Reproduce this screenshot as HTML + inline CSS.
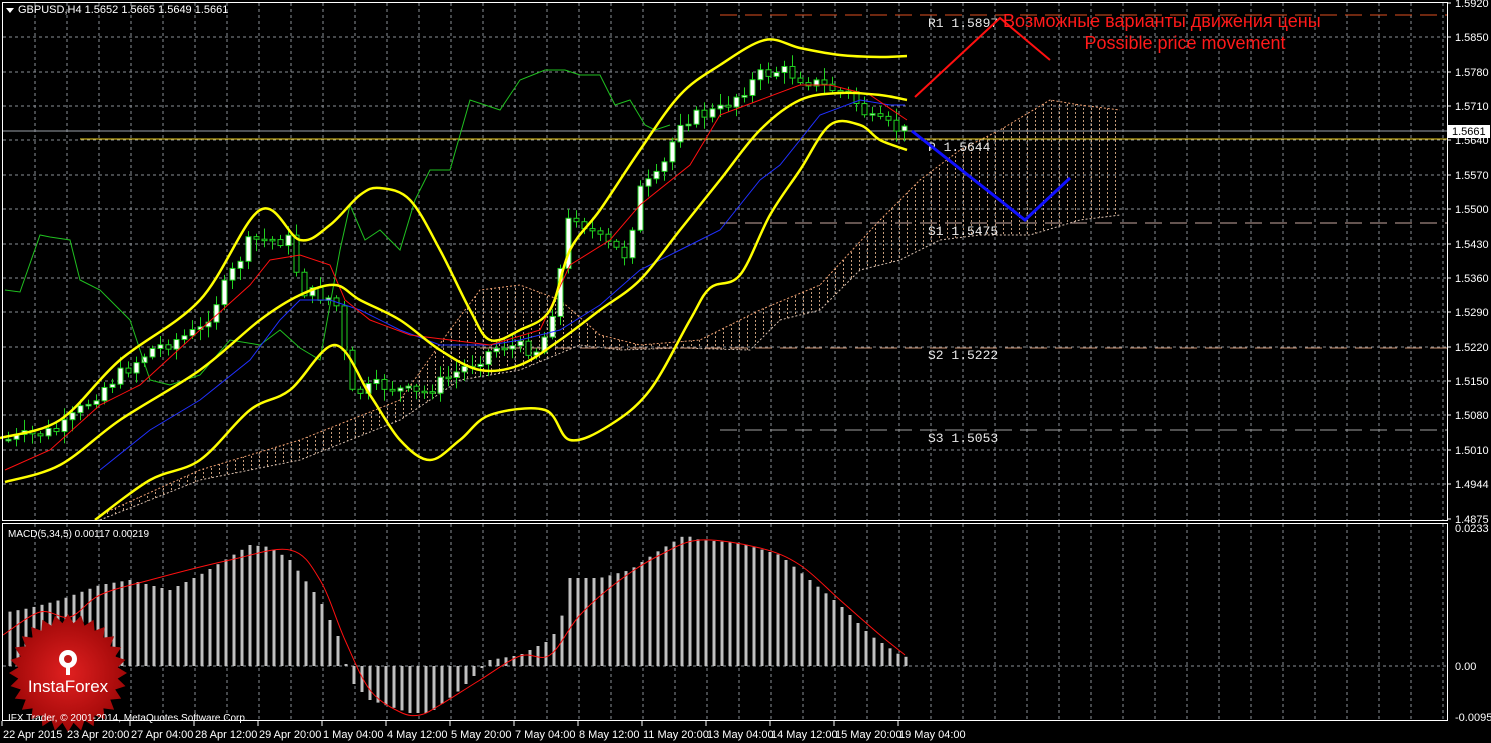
<!DOCTYPE html>
<html><head><meta charset="utf-8"><style>
html,body{margin:0;padding:0;background:#000;width:1491px;height:743px;overflow:hidden}
svg{display:block}
text{font-family:"Liberation Sans","DejaVu Sans",sans-serif}
.mono text{font-family:"Liberation Mono","DejaVu Sans Mono",monospace}
</style></head><body>
<svg id="s" width="1491" height="743" xmlns="http://www.w3.org/2000/svg">
<defs>
<pattern id="hatch" width="8" height="4" patternUnits="userSpaceOnUse">
<rect x="3" y="0" width="1" height="2" fill="#e8b890"/>
</pattern>
<radialGradient id="rg"><stop offset="0" stop-color="#e02020"/><stop offset="1" stop-color="#a00808"/></radialGradient>
</defs>
<rect width="1491" height="743" fill="#000"/>
<g id="grid"></g>
<polygon id="cloud" fill="url(#hatch)" opacity="0.85"/>
<path id="spanA" fill="none" stroke="#f0a070" stroke-width="1" stroke-dasharray="2,2"/>
<path id="spanB" fill="none" stroke="#d8c0b0" stroke-width="1" stroke-dasharray="2,2"/>
<line x1="720" y1="15" x2="1447" y2="15" stroke="#e05020" stroke-dasharray="17,8"/>
<line x1="2" y1="131" x2="1447" y2="131" stroke="#9aa0a8"/>
<line x1="80" y1="139" x2="1447" y2="139" stroke="#f0d020"/>
<line x1="720" y1="223" x2="1447" y2="223" stroke="#c8a8a0" stroke-dasharray="17,8"/>
<line x1="480" y1="348" x2="1447" y2="348" stroke="#c89070" stroke-dasharray="17,8"/>
<line x1="720" y1="430" x2="1447" y2="430" stroke="#a0a0a0" stroke-dasharray="17,8"/>
<g class="mono" font-size="13" fill="#e8e8e8">
<text x="928" y="27">R1 1.5897</text>
<text x="928" y="151">P 1.5644</text>
<text x="928" y="235">S1 1.5475</text>
<text x="928" y="359">S2 1.5222</text>
<text x="928" y="442">S3 1.5053</text>
</g>
<g id="candles"></g>
<path id="green" fill="none" stroke="#20c020" stroke-width="1"/>
<path id="blue" fill="none" stroke="#2030ff" stroke-width="1"/>
<path id="red" fill="none" stroke="#ff1010" stroke-width="1"/>
<path id="bbU" fill="none" stroke="#ffff00" stroke-width="2.5"/>
<path id="bbM" fill="none" stroke="#ffff00" stroke-width="2.5"/>
<path id="bbL" fill="none" stroke="#ffff00" stroke-width="2.5"/>
<polyline points="912,131 1025,220 1070,178" fill="none" stroke="#1010ff" stroke-width="3"/>
<polyline points="915,97 1000,18 1050,60" fill="none" stroke="#ff1010" stroke-width="2"/>
<text x="1003" y="27" font-size="18" fill="#ff1a1a">Возможные варианты движения цены</text>
<text x="1185" y="49" font-size="18" fill="#ff1a1a" text-anchor="middle">Possible price movement</text>
<g id="macd"></g>
<path id="sig" fill="none" stroke="#ff1010" stroke-width="1"/>
<rect x="2.5" y="2.5" width="1445" height="518" fill="none" stroke="#fff"/>
<rect x="2.5" y="523.5" width="1445" height="197" fill="none" stroke="#fff"/>
<polygon points="6,8 14,8 10,13" fill="#fff"/>
<text x="18" y="13" font-size="11" fill="#fff">GBPUSD,H4  1.5652 1.5665 1.5649 1.5661</text>
<text x="8" y="537" font-size="10" fill="#fff">MACD(5,34,5) 0.00117 0.00219</text>
<g transform="translate(68,673)">
<polygon id="star" fill="url(#rg)"/>
<circle cx="0" cy="-14" r="9" fill="#fff"/>
<circle cx="0" cy="-14" r="4" fill="#c01818"/>
<rect x="-2" y="-10" width="4" height="12" fill="#fff"/>
<text y="19" font-size="17" fill="#fff" text-anchor="middle">InstaForex</text>
</g>
<text x="8" y="721" font-size="10" fill="#fff">IFX Trader, © 2001-2014, MetaQuotes Software Corp.</text>
<g id="axis" font-size="11" fill="#fff"></g>
<rect x="1448" y="125" width="42" height="13" fill="#fff"/>
<text x="1452" y="135" font-size="11" fill="#000">1.5661</text>
</svg>
<script>
(function(){
var NS="http://www.w3.org/2000/svg";
function el(p,t,a){var e=document.createElementNS(NS,t);for(var k in a)e.setAttribute(k,a[k]);p.appendChild(e);return e;}
function interp(pts,x){if(x<=pts[0][0])return pts[0][1];for(var i=1;i<pts.length;i++){if(x<=pts[i][0]){var a=pts[i-1],b=pts[i];return a[1]+(b[1]-a[1])*(x-a[0])/(b[0]-a[0]);}}return pts[pts.length-1][1];}
function smooth(pts){var d="M"+pts[0][0]+","+pts[0][1];for(var i=0;i<pts.length-1;i++){var p0=pts[i-1]||pts[i],p1=pts[i],p2=pts[i+1],p3=pts[i+2]||p2;d+=" C"+(p1[0]+(p2[0]-p0[0])/6)+","+(p1[1]+(p2[1]-p0[1])/6)+" "+(p2[0]-(p3[0]-p1[0])/6)+","+(p2[1]-(p3[1]-p1[1])/6)+" "+p2[0]+","+p2[1];}return d;}
function line(pts){return "M"+pts.map(function(p){return p.join(",")}).join(" L");}
var g=document.getElementById("grid");
for(var x=35;x<1447;x+=32){el(g,"line",{x1:x,y1:3,x2:x,y2:520,stroke:"#8a8f96","stroke-dasharray":"3,3"});el(g,"line",{x1:x,y1:524,x2:x,y2:720,stroke:"#8a8f96","stroke-dasharray":"3,3"});}
var ax=document.getElementById("axis");
var labs=["1.5920","1.5850","1.5780","1.5710","1.5640","1.5570","1.5500","1.5430","1.5360","1.5290","1.5220","1.5150","1.5080","1.5010","1.4944","1.4875"];
for(var i=0;i<16;i++){var y=Math.round(3+i*34.37);if(i>0&&i<15)el(g,"line",{x1:3,y1:y,x2:1447,y2:y,stroke:"#8a8f96","stroke-dasharray":"3,3"});el(g,"line",{x1:1447,y1:y,x2:1451,y2:y,stroke:"#fff"});var t=el(ax,"text",{x:1455,y:y+4});t.textContent=labs[i];}
el(g,"line",{x1:3,y1:666,x2:1447,y2:666,stroke:"#8a8f96","stroke-dasharray":"3,3"});
[["0.0233",532],["0.00",670],["-0.00958",721]].forEach(function(l){var t=el(ax,"text",{x:1455,y:l[1]});t.textContent=l[0];});
var dates=["22 Apr 2015","23 Apr 20:00","27 Apr 04:00","28 Apr 12:00","29 Apr 20:00","1 May 04:00","4 May 12:00","5 May 20:00","7 May 04:00","8 May 12:00","11 May 20:00","13 May 04:00","14 May 12:00","15 May 20:00","19 May 04:00"];
dates.forEach(function(d,i){var x=3+i*64;el(g,"line",{x1:i==0?2:x-1,y1:721,x2:i==0?2:x-1,y2:726,stroke:"#fff"});var t=el(ax,"text",{x:x,y:738});t.textContent=d;});
var A=[[100,515],[200,470],[300,440],[400,400],[450,330],[480,290],[520,285],[560,300],[600,335],[640,345],[700,340],[760,310],[820,285],[880,220],[920,180],[960,150],[1000,130],[1050,100],[1080,105],[1120,110]];
var B=[[100,520],[200,480],[300,460],[400,420],[460,380],[520,370],[580,345],[620,350],[680,348],[750,350],[780,320],[820,310],[860,270],[900,260],[940,240],[980,235],[1030,235],[1080,220],[1120,215]];
document.getElementById("cloud").setAttribute("points",A.concat(B.slice().reverse()).map(function(p){return p.join(",")}).join(" "));
document.getElementById("spanA").setAttribute("d",line(A));
document.getElementById("spanB").setAttribute("d",line(B));
var C=[[5,440],[60,430],[100,390],[150,350],[200,330],[250,240],[290,240],[300,290],[335,300],[345,360],[350,395],[380,385],[420,395],[460,370],[500,345],[540,350],[555,300],[570,210],[600,240],[625,255],[640,190],[660,175],[680,120],[720,110],[760,75],[780,70],[820,85],[850,95],[870,120],[900,130],[910,132]];
var cg=document.getElementById("candles");var seed=7;function rnd(){seed=(seed*9301+49297)%233280;return seed/233280;}
var prev=interp(C,8);
for(var x=8;x<=910;x+=8){var c=interp(C,x)+(rnd()-0.5)*14;var o=prev;prev=c;var bt=Math.min(o,c),bb=Math.max(o,c);var hi=bt-rnd()*10-2,lo=bb+rnd()*10+2;var xx=Math.round(x)+0.5;
el(cg,"line",{x1:xx,y1:hi,x2:xx,y2:lo,stroke:"#20d020"});
el(cg,"rect",{x:xx-2.5,y:bt,width:5,height:Math.max(bb-bt,1.5),fill:c<o?"#fff":"#000",stroke:"#20d020","stroke-width":1});}
var G=[[5,290],[20,292],[40,235],[50,237],[70,240],[80,280],[100,290],[130,320],[150,380],[170,385],[200,375],[230,340],[260,345],[280,330],[300,348],[320,360],[340,250],[350,205],[365,240],[380,230],[400,250],[415,200],[430,170],[450,170],[470,100],[500,110],[520,80],[545,70],[565,70],[580,75],[600,75],[615,105],[630,100],[645,125],[655,130],[670,125]];
document.getElementById("green").setAttribute("d",line(G));
var R=[[5,470],[50,450],[100,405],[140,385],[200,330],[250,285],[270,260],[300,255],[330,265],[345,300],[370,320],[410,335],[450,340],[490,345],[540,330],[570,265],[610,240],[640,205],[690,165],[720,115],[760,100],[800,85],[830,85],[870,95],[907,120]];
document.getElementById("red").setAttribute("d",line(R));
var Bl=[[100,470],[150,430],[200,400],[250,360],[280,320],[300,300],[330,300],[360,310],[400,330],[440,345],[490,345],[520,340],[560,330],[600,305],[640,270],[680,250],[720,230],[760,180],[780,165],[820,115],[860,100],[890,105],[905,105]];
document.getElementById("blue").setAttribute("d",line(Bl));
var U=[[0,438],[60,420],[120,360],[200,300],[260,210],[300,240],[330,225],[360,195],[380,188],[410,200],[440,250],[470,310],[490,340],[520,330],[550,310],[570,250],[600,210],[640,150],[680,95],[720,65],[765,40],[800,48],[840,55],[880,57],[907,56]];
var M=[[5,482],[60,465],[120,420],[200,370],[260,320],[300,295],[335,285],[360,300],[400,320],[440,350],[480,370],[520,365],[560,340],[600,310],[640,280],[680,230],[720,180],[760,130],[800,100],[840,93],[880,95],[907,100]];
var L=[[95,520],[150,480],[200,460],[250,410],[290,390],[335,345],[370,395],[400,440],[430,460],[460,440],[490,415],[545,410],[570,440],[610,425],[650,390],[690,320],[710,288],[740,275],[770,215],[800,170],[830,125],[860,125],[880,140],[907,150]];
document.getElementById("bbU").setAttribute("d",smooth(U));
document.getElementById("bbM").setAttribute("d",smooth(M));
document.getElementById("bbL").setAttribute("d",smooth(L));
var H=[[8,612],[30,608],[60,600],[100,585],[130,580],[170,590],[200,575],[250,545],[270,547],[290,560],[320,600],[340,640],[350,680],[370,700],[410,713],[430,713],[460,690],[490,660],[520,655],[550,640],[560,625],[570,578],[600,578],[630,570],[660,550],[685,535],[700,540],[740,543],[780,555],[810,580],[840,605],[870,635],[900,655],[910,658]];
var mg=document.getElementById("macd");
for(var x=10;x<=910;x+=8){var y=interp(H,x);var t1=Math.min(y,666),b1=Math.max(y,666);el(mg,"rect",{x:x-1.5,y:t1,width:3,height:Math.max(b1-t1,1),fill:"#c0c0c0"});}
var S=[[3,635],[40,612],[70,617],[100,595],[150,580],[230,560],[290,550],[320,580],[345,640],[370,690],[400,712],[420,715],[440,705],[480,680],[520,656],[550,655],[580,615],[620,580],[660,555],[700,540],[760,548],[800,565],[840,600],[880,635],[905,655]];
document.getElementById("sig").setAttribute("d",smooth(S));
var pts=[];for(var i=0;i<56;i++){var r=i%2?50:59;var a=i*Math.PI/28;pts.push((r*Math.cos(a)).toFixed(1)+","+(r*Math.sin(a)).toFixed(1));}
document.getElementById("star").setAttribute("points",pts.join(" "));
})();
</script>
</body></html>
